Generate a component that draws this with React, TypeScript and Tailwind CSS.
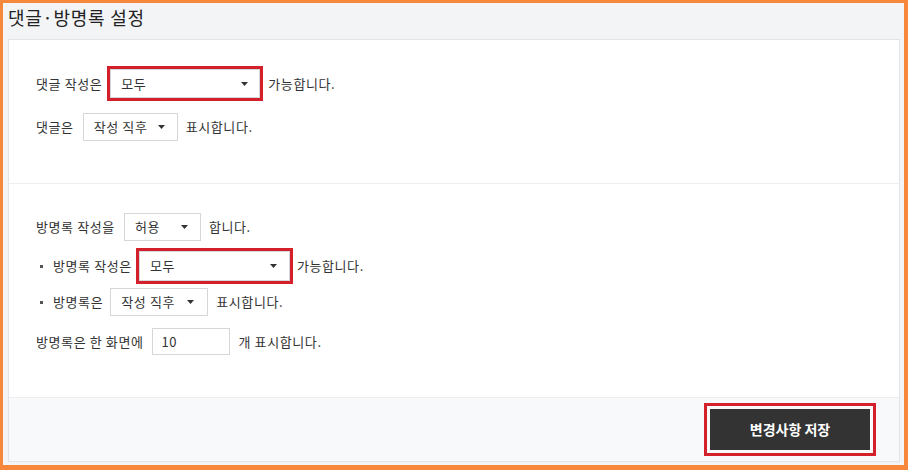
import React from "react";

const font = { fontFamily: '"Noto Sans CJK KR", "Noto Sans", sans-serif' };

function Arrow() {
  return (
    <svg width="7" height="4" viewBox="0 0 7 4" className="shrink-0">
      <polygon points="0,0 7,0 3.5,4" fill="#333" />
    </svg>
  );
}

function Select({ label, w, h = 28, pr = 12 }: { label: string; w: number; h?: number; pr?: number }) {
  return (
    <span
      className="flex items-center justify-between border border-[#d5d7da] bg-white pl-[10px] text-[13px] text-[#333]"
      style={{ width: w, height: h, paddingRight: pr }}
    >
      <span>{label}</span>
      <Arrow />
    </span>
  );
}

function Red({ children }: { children: React.ReactNode }) {
  return <span className="-mx-[3px] flex border-[3px] border-[#d3202a]">{children}</span>;
}

function Bullet() {
  return <span className="ml-[4px] mr-[10px] h-[3px] w-[3px] bg-[#555]" />;
}

export default function App() {
  return (
    <div
      className="box-border h-[470px] w-[908px] border-b-[5px] border-l-[3px] border-r-[4px] border-t-[3px] border-[#f7873a] bg-[#f2f4f6] text-[13px] tracking-[0.6px] text-[#333]"
      style={font}
    >
      <div className="h-[36px] pl-[5px] pt-[1px] text-[18px] leading-[26px] tracking-[0.75px] text-[#222]">댓글·방명록 설정</div>
      <div className="ml-[5px] flex h-[423px] w-[892px] flex-col border border-[#e2e4e7] bg-white">
        <div className="h-[144px] border-b border-[#eceef0] pl-[27px] pt-[26px]">
          <div className="flex h-[35px] items-center gap-[8px]">
            <span>댓글 작성은</span>
            <Red>
              <Select label="모두" w={150} h={29} pr={11} />
            </Red>
            <span>가능합니다.</span>
          </div>
          <div className="mt-[12px] flex h-[28px] items-center">
            <span className="mr-[9px]">댓글은</span>
            <Select label="작성 직후" w={95} />
            <span className="ml-[8px]">표시합니다.</span>
          </div>
        </div>
        <div className="h-[213px] pl-[27px] pt-[29px]">
          <div className="flex h-[28px] items-center">
            <span className="mr-[9px]">방명록 작성을</span>
            <Select label="허용" w={77} />
            <span className="ml-[8px]">합니다.</span>
          </div>
          <div className="mt-[7px] flex h-[36px] items-center">
            <Bullet />
            <span className="mr-[7px]">방명록 작성은</span>
            <Red>
              <Select label="모두" w={151} h={30} pr={12} />
            </Red>
            <span className="ml-[7px]">가능합니다.</span>
          </div>
          <div className="mt-[4px] flex h-[28px] items-center">
            <Bullet />
            <span className="mr-[7px]">방명록은</span>
            <Select label="작성 직후" w={98} pr={13} />
            <span className="ml-[8px]">표시합니다.</span>
          </div>
          <div className="mt-[12px] flex h-[27px] items-center gap-[8px]">
            <span>방명록은 한 화면에</span>
            <span className="flex h-[27px] w-[78px] items-center border border-[#d5d7da] pl-[9px]">10</span>
            <span className="ml-[1px]">개 표시합니다.</span>
          </div>
        </div>
        <div className="flex flex-1 justify-end border-t border-[#eceef0] bg-[#f8f9fb] pr-[23px] pt-[5px]">
          <div className="h-[53px] border-[3px] border-[#d3202a] p-[3px]">
            <button className="flex h-[41px] w-[160px] items-center justify-center bg-[#333] text-[14px] font-bold tracking-normal text-white">
              변경사항 저장
            </button>
          </div>
        </div>
      </div>
    </div>
  );
}
